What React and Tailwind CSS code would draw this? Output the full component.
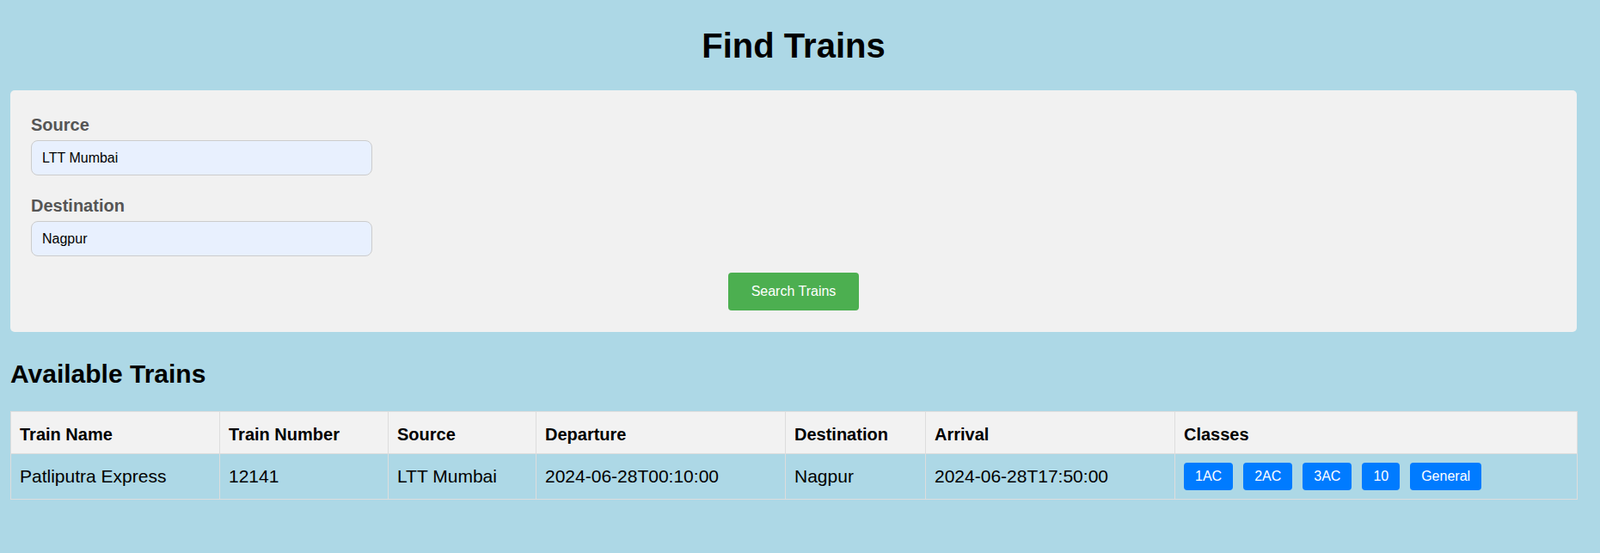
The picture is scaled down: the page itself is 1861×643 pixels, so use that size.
import { useState } from 'react'

const trains = [
  {
    name: 'Patliputra Express',
    number: '12141',
    source: 'LTT Mumbai',
    departure: '2024-06-28T00:10:00',
    destination: 'Nagpur',
    arrival: '2024-06-28T17:50:00',
    classes: ['1AC', '2AC', '3AC', '10', 'General'],
  },
]

const columns = [
  { label: 'Train Name', w: 'w-[243px]' },
  { label: 'Train Number', w: 'w-[196px]' },
  { label: 'Source', w: 'w-[172px]' },
  { label: 'Departure', w: 'w-[290px]' },
  { label: 'Destination', w: 'w-[163px]' },
  { label: 'Arrival', w: 'w-[290px]' },
  { label: 'Classes', w: 'w-[468px]' },
]

export default function App() {
  const [source, setSource] = useState('LTT Mumbai')
  const [destination, setDestination] = useState('Nagpur')

  const labelCls = 'block text-[20px] leading-[28px] font-bold text-[#555] mb-[4px]'
  const inputCls = 'block w-[397px] h-[41px] bg-[#e8f0fe] border border-[#ccc] rounded-[8px] px-[12px] text-[16px] text-black outline-none'
  const thCls = 'border border-[#ddd] bg-[#f2f2f2] px-[10px] pt-[12px] pb-[8px] text-left text-[20px] leading-[28px] font-bold'
  const tdCls = 'border border-[#ddd] px-[10px] py-[10px] text-[21px] leading-[28px] align-middle'

  return (
    <div className="min-h-screen bg-[#add8e6] font-['Liberation_Sans',Arial,sans-serif] text-black">
      <div className="ml-[12px] w-[1822px] pt-[25px] pb-[40px]">
        <h1 className="text-center text-[40px] leading-[56px] font-bold mb-[24px]">Find Trains</h1>

        {/* search form */}
        <div className="bg-[#f1f1f1] rounded-[5px] px-[24px] pt-[26px] pb-[25px]">
          <label className={labelCls}>Source</label>
          <input className={inputCls} value={source} onChange={e => setSource(e.target.value)} />
          <label className={`${labelCls} mt-[21px]`}>Destination</label>
          <input className={inputCls} value={destination} onChange={e => setDestination(e.target.value)} />
          <div className="flex justify-center mt-[19px]">
            <button className="w-[152px] h-[44px] bg-[#4caf50] text-white text-[16px] rounded-[4px]">Search Trains</button>
          </div>
        </div>

        <h2 className="text-[30px] leading-[40px] font-bold mt-[29px] mb-[23px]">Available Trains</h2>

        <table className="w-full table-fixed border-collapse">
          <thead>
            <tr>
              {columns.map(c => (
                <th key={c.label} className={`${thCls} ${c.w}`}>{c.label}</th>
              ))}
            </tr>
          </thead>
          <tbody>
            {trains.map(t => (
              <tr key={t.number}>
                <td className={tdCls}>{t.name}</td>
                <td className={tdCls}>{t.number}</td>
                <td className={tdCls}>{t.source}</td>
                <td className={tdCls}>{t.departure}</td>
                <td className={tdCls}>{t.destination}</td>
                <td className={tdCls}>{t.arrival}</td>
                <td className={tdCls}>
                  <div className="flex gap-[12px]">
                    {t.classes.map(cl => (
                      <span key={cl} className="bg-[#007bff] text-white text-[16px] leading-[18px] px-[13px] py-[7px] rounded-[4px]">{cl}</span>
                    ))}
                  </div>
                </td>
              </tr>
            ))}
          </tbody>
        </table>
      </div>
    </div>
  )
}
